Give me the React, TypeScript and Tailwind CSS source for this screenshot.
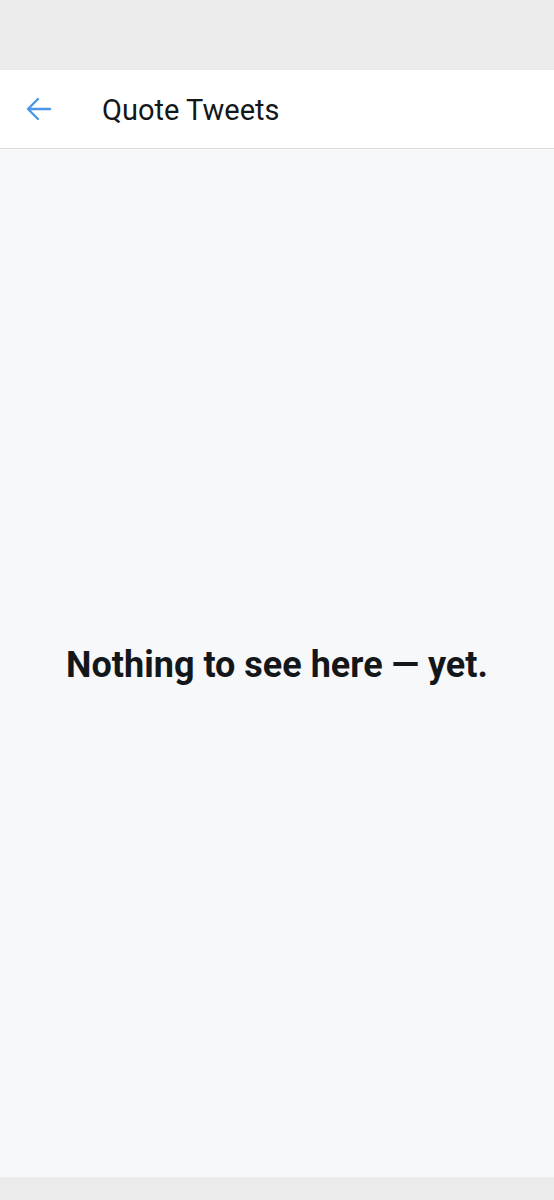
export default function App() {
  return (
    <div className="flex h-[1200px] w-full flex-col bg-[#ebebeb] font-['Roboto',sans-serif]">
      <div className="h-[70px] shrink-0" />
      <header className="flex h-[79px] shrink-0 items-center border-b border-[#dcdcdc] bg-white">
        <div className="flex w-[102px] items-center pl-[26px]">
          <svg width="26" height="24" viewBox="0 0 26 24" fill="none" stroke="#4b96e6" strokeWidth="2.4" strokeLinecap="round" strokeLinejoin="round">
            <path d="M24 12H3" />
            <path d="M12 2L2 12l10 10" />
          </svg>
        </div>
        <h1 className="pt-[3px] text-[29px] leading-none text-[#14171a]">Quote Tweets</h1>
      </header>
      <main className="flex h-[1029px] shrink-0 items-center justify-center border-b border-[#f0f0f0] bg-[#f7f8fa] pt-[4px]">
        <p className="text-[36px] font-bold text-[#14171a]">Nothing to see here — yet.</p>
      </main>
    </div>
  )
}
